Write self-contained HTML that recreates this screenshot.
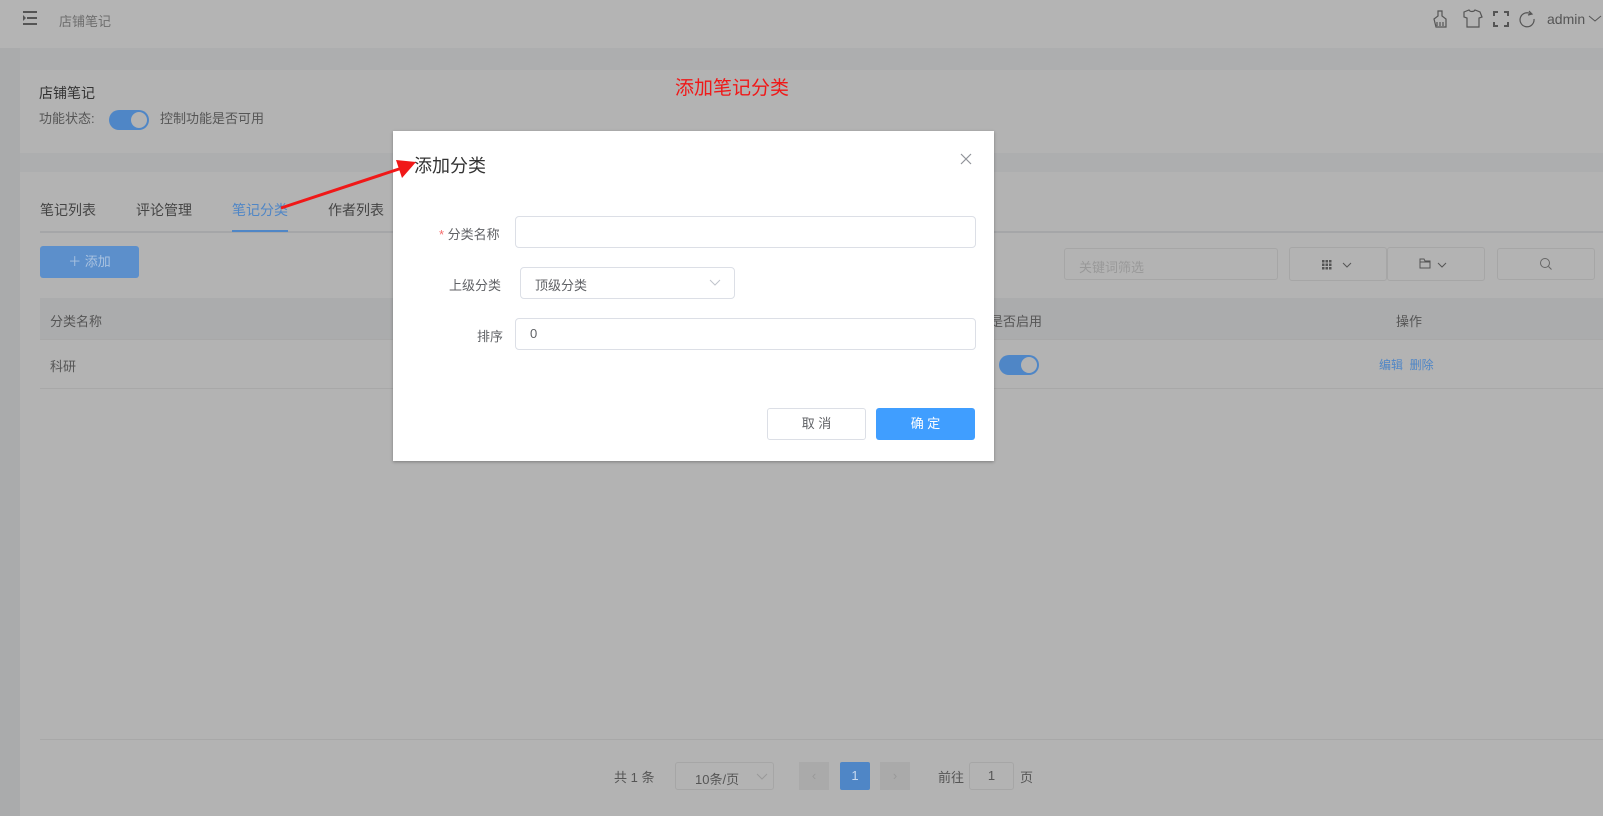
<!DOCTYPE html>
<html><head><meta charset="utf-8"><style>
*{margin:0;padding:0;box-sizing:border-box}
body{width:1603px;height:816px;background:#adaeaf;font-family:"Liberation Sans","Noto Sans CJK SC",sans-serif;position:relative;overflow:hidden;font-size:13px;color:#4a4a4a}
.a{position:absolute;white-space:nowrap}
.card{background:#b3b3b3}
.box{border:1px solid #a6a6a6;border-radius:3px}
</style></head><body>
<div class="a" style="left:0;top:0;width:1603px;height:48px;background:#b4b4b4"></div>
<div class="a" style="left:0;top:48px;width:20px;height:768px;background:#aaabac"></div>
<svg class="a" style="left:22px;top:11px" width="16" height="14"><path d="M1 1h14M5 7h10M1 13h14" stroke="#555" stroke-width="2"/><path d="M1 4l3 3-3 3z" fill="#555"/></svg>
<div class="a" style="left:59px;top:11px;font-size:13px;color:#6e6e6e">店铺笔记</div>
<svg class="a" style="left:1432px;top:8px" width="160" height="22" fill="none" stroke="#555" stroke-width="1.2">
<path d="M6 3l4 0 0 5 4 3 0 8-10 0-2-8 4-3z M5 14v4 M8 14v4 M11 14v4"/>
<path d="M32 4l5-2c1 2 5 2 6 0l5 2 2 5-3 1v9h-12v-9l-3-1z"/>
<path d="M62 8V4h4 M72 4h4v4 M76 14v4h-4 M66 18h-4v-4" stroke-width="2"/>
<path d="M99 6a7 7 0 1 0 3 5 M97 3l3 3-4 1"/>
</svg>
<div class="a" style="left:1547px;top:11px;font-size:14px;color:#555">admin</div>
<svg class="a" style="left:1588px;top:15px" width="14" height="8"><path d="M1 1l6 5 6-5" stroke="#555" fill="none"/></svg>

<div class="a card" style="left:20px;top:70px;width:1583px;height:83px"></div>
<div class="a" style="left:39px;top:83px;font-size:14px;color:#333">店铺笔记</div>
<div class="a" style="left:39px;top:108px;color:#555">功能状态:</div>
<div class="a" style="left:109px;top:110px;width:40px;height:20px;border-radius:10px;background:#4f86c6"></div>
<div class="a" style="left:131px;top:112px;width:16px;height:16px;border-radius:50%;background:#b3b3b3"></div>
<div class="a" style="left:160px;top:108px;color:#555">控制功能是否可用</div>

<div class="a card" style="left:20px;top:172px;width:1583px;height:644px"></div>
<div class="a" style="left:40px;top:200px;font-size:14px;color:#444">笔记列表</div>
<div class="a" style="left:136px;top:200px;font-size:14px;color:#444">评论管理</div>
<div class="a" style="left:232px;top:200px;font-size:14px;color:#4f86c6">笔记分类</div>
<div class="a" style="left:328px;top:200px;font-size:14px;color:#444">作者列表</div>
<div class="a" style="left:40px;top:231px;width:1563px;height:2px;background:#a5a6a8"></div>
<div class="a" style="left:232px;top:230px;width:56px;height:2px;background:#4f86c6"></div>
<div class="a" style="left:40px;top:246px;width:99px;height:32px;border-radius:3px;background:#5c8fcb;color:#aac3e0;text-align:center;line-height:32px">＋ 添加</div>

<div class="a box" style="left:1064px;top:248px;width:214px;height:32px;color:#999;padding:8px 14px">关键词筛选</div>
<div class="a box" style="left:1289px;top:247px;width:98px;height:34px"></div>
<svg class="a" style="left:1322px;top:259px" width="40" height="12"><g fill="#555"><rect x="0" y="1" width="2.5" height="2.5"/><rect x="3.5" y="1" width="2.5" height="2.5"/><rect x="7" y="1" width="2.5" height="2.5"/><rect x="0" y="4.5" width="2.5" height="2.5"/><rect x="3.5" y="4.5" width="2.5" height="2.5"/><rect x="7" y="4.5" width="2.5" height="2.5"/><rect x="0" y="8" width="2.5" height="2.5"/><rect x="3.5" y="8" width="2.5" height="2.5"/><rect x="7" y="8" width="2.5" height="2.5"/></g><path d="M21 4l4 4 4-4" stroke="#555" fill="none"/></svg>
<div class="a box" style="left:1387px;top:247px;width:98px;height:34px"></div>
<svg class="a" style="left:1419px;top:258px" width="40" height="12"><path d="M1 1h4l1 2h5v7H1z M1 4h10" stroke="#555" fill="none"/><path d="M19 5l4 4 4-4" stroke="#555" fill="none"/></svg>
<div class="a box" style="left:1497px;top:248px;width:98px;height:32px"></div>
<svg class="a" style="left:1539px;top:257px" width="14" height="14"><circle cx="6" cy="6" r="4.5" stroke="#666" fill="none"/><path d="M9.5 9.5l3 3" stroke="#666"/></svg>

<div class="a" style="left:40px;top:298px;width:1563px;height:41px;background:#abacad"></div>
<div class="a" style="left:50px;top:311px;color:#555">分类名称</div>
<div class="a" style="left:990px;top:311px;color:#555">是否启用</div>
<div class="a" style="left:1396px;top:311px;color:#555">操作</div>
<div class="a" style="left:40px;top:339px;width:1563px;height:1px;background:#a8a8a8"></div>
<div class="a" style="left:50px;top:356px;color:#555">科研</div>
<div class="a" style="left:999px;top:355px;width:40px;height:20px;border-radius:10px;background:#4f86c6"></div>
<div class="a" style="left:1021px;top:357px;width:16px;height:16px;border-radius:50%;background:#b3b3b3"></div>
<div class="a" style="left:1379px;top:356px;color:#4f86c6;font-size:12px">编辑 &nbsp;删除</div>
<div class="a" style="left:40px;top:388px;width:1563px;height:1px;background:#a8a8a8"></div>
<div class="a" style="left:40px;top:739px;width:1563px;height:1px;background:#a8a8a8"></div>

<div class="a" style="left:614px;top:767px;color:#555">共 1 条</div>
<div class="a box" style="left:675px;top:762px;width:99px;height:28px;color:#555;padding:6px 0 0 19px">10条/页</div>
<svg class="a" style="left:756px;top:773px" width="12" height="8"><path d="M1 1l5 5 5-5" stroke="#999" fill="none"/></svg>
<div class="a" style="left:799px;top:762px;width:30px;height:28px;background:#aaa;color:#999;text-align:center;line-height:28px">‹</div>
<div class="a" style="left:840px;top:762px;width:30px;height:28px;background:#4f86c6;color:#c9daf0;text-align:center;line-height:28px;border-radius:2px">1</div>
<div class="a" style="left:880px;top:762px;width:30px;height:28px;background:#aaa;color:#999;text-align:center;line-height:28px">›</div>
<div class="a" style="left:938px;top:767px;color:#555">前往</div>
<div class="a box" style="left:969px;top:762px;width:45px;height:28px;text-align:center;line-height:26px;color:#555">1</div>
<div class="a" style="left:1020px;top:767px;color:#555">页</div>

<div class="a" style="left:675px;top:73px;font-size:19px;color:#f01818">添加笔记分类</div>

<div class="a" style="left:393px;top:131px;width:601px;height:330px;background:#fff;box-shadow:0 1px 3px rgba(0,0,0,.3)"></div>
<div class="a" style="left:414px;top:152px;font-size:18px;color:#333">添加分类</div>
<svg class="a" style="left:960px;top:153px" width="12" height="12"><path d="M1 1l10 10M11 1L1 11" stroke="#909399" stroke-width="1.2"/></svg>
<div class="a" style="left:439px;top:224px;color:#606266"><span style="color:#f56c6c">*</span> 分类名称</div>
<div class="a" style="left:515px;top:216px;width:461px;height:32px;border:1px solid #dcdfe6;border-radius:4px"></div>
<div class="a" style="left:449px;top:275px;color:#606266">上级分类</div>
<div class="a" style="left:520px;top:267px;width:215px;height:32px;border:1px solid #dcdfe6;border-radius:4px;padding:7px 14px;color:#606266">顶级分类</div>
<svg class="a" style="left:709px;top:279px" width="12" height="8"><path d="M1 1l5 5 5-5" stroke="#c0c4cc" fill="none"/></svg>
<div class="a" style="left:477px;top:326px;color:#606266">排序</div>
<div class="a" style="left:515px;top:318px;width:461px;height:32px;border:1px solid #dcdfe6;border-radius:4px;padding:7px 14px;color:#606266">0</div>
<div class="a" style="left:767px;top:408px;width:99px;height:32px;border:1px solid #dcdfe6;border-radius:3px;text-align:center;line-height:30px;color:#606266">取 消</div>
<div class="a" style="left:876px;top:408px;width:99px;height:32px;background:#409eff;border-radius:3px;text-align:center;line-height:32px;color:#fff">确 定</div>

<svg class="a" style="left:0;top:0" width="1603" height="816"><line x1="281" y1="208" x2="402" y2="168" stroke="#f01818" stroke-width="3"/><polygon points="416,162 396,160 402,178" fill="#f01818"/></svg>
</body></html>
